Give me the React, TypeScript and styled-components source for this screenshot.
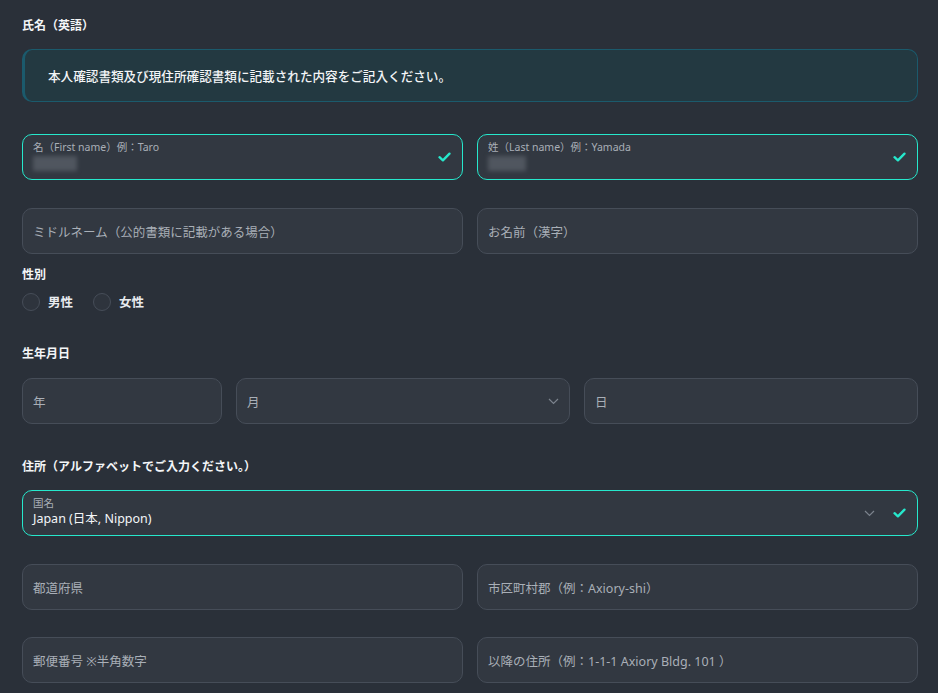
import React from 'react';
import styled, { createGlobalStyle } from 'styled-components';

const GlobalStyle = createGlobalStyle`
  html, body {
    margin: 0;
    padding: 0;
    background: #2a3039;
  }
  body {
    font-family: "Noto Sans", "Noto Sans CJK JP", sans-serif;
    color: #e8ebef;
  }
`;

const Page = styled.div`
  width: 938px;
  height: 693px;
  overflow: hidden;
  box-sizing: border-box;
  padding: 17px 20px 0 22px;
  display: flex;
  flex-direction: column;
`;

const SectionTitle = styled.div<{ $mt?: number }>`
  font-size: 12px;
  font-weight: 700;
  line-height: 18px;
  color: #f4f6f8;
  margin-top: ${(p) => p.$mt ?? 0}px;
`;

const Notice = styled.div`
  margin-top: 14px;
  height: 53px;
  box-sizing: border-box;
  border: 1px solid #1b5a6c;
  border-left: 3px solid #1b5a6c;
  border-radius: 10px;
  background: #233941;
  display: flex;
  align-items: center;
  padding-left: 23px;
  font-size: 12.6px;
  font-weight: 500;
  color: #f2f4f6;
`;

const Row = styled.div<{ $mt: number; $cols?: string }>`
  margin-top: ${(p) => p.$mt}px;
  display: grid;
  grid-template-columns: ${(p) => p.$cols ?? '1fr 1fr'};
  gap: 14px;
`;

const Field = styled.div<{ $active?: boolean }>`
  position: relative;
  height: 46px;
  box-sizing: border-box;
  border: 1px solid ${(p) => (p.$active ? '#26e8cc' : '#464d58')};
  border-radius: 10px;
  background: #323841;
  display: flex;
  align-items: center;
  padding: 0 10px;
`;

const Placeholder = styled.div`
  font-size: 12.5px;
  color: #a9afb7;
  flex: 1;
`;

const Stack = styled.div`
  flex: 1;
  display: flex;
  flex-direction: column;
  margin-top: -3px;
`;

const SmallLabel = styled.div`
  font-size: 10.5px;
  line-height: 14px;
  color: #a9afb7;
`;

const Value = styled.div`
  font-size: 12.5px;
  line-height: 17px;
  color: #f4f6f8;
`;

const Blurred = styled.div<{ $w: number }>`
  margin-top: 2px;
  width: ${(p) => p.$w}px;
  height: 15px;
  background: #50565f;
  filter: blur(2px);
`;

const Icons = styled.div`
  display: flex;
  align-items: center;
  gap: 18px;
  margin-right: 1px;
`;

const Gender = styled.div`
  margin-top: 8px;
  display: flex;
  gap: 20px;
`;

const RadioItem = styled.label`
  display: flex;
  align-items: center;
  gap: 8px;
  font-size: 12.5px;
  font-weight: 700;
  color: #e8ebef;
`;

const Circle = styled.span`
  width: 16px;
  height: 16px;
  border-radius: 50%;
  border: 1px solid #464d58;
  background: #2e343d;
`;

const Check = () => (
  <svg width="13" height="10" viewBox="0 0 13 10">
    <path d="M1.5 5.2 L4.9 8.4 L11.5 1.6" fill="none" stroke="#26e8cc" strokeWidth="2.3" strokeLinecap="round" strokeLinejoin="round" />
  </svg>
);

const Chevron = () => (
  <svg width="11" height="7" viewBox="0 0 11 7">
    <path d="M1 1 L5.5 5.5 L10 1" fill="none" stroke="#7c838d" strokeWidth="1.2" />
  </svg>
);

export default function App() {
  return (
    <>
      <GlobalStyle />
      <Page>
        <SectionTitle>氏名（英語）</SectionTitle>
        <Notice>本人確認書類及び現住所確認書類に記載された内容をご記入ください。</Notice>

        <Row $mt={32}>
          <Field $active>
            <Stack>
              <SmallLabel>名（First name）例：Taro</SmallLabel>
              <Blurred $w={44} />
            </Stack>
            <Icons>
              <Check />
            </Icons>
          </Field>
          <Field $active>
            <Stack>
              <SmallLabel>姓（Last name）例：Yamada</SmallLabel>
              <Blurred $w={38} />
            </Stack>
            <Icons>
              <Check />
            </Icons>
          </Field>
        </Row>

        <Row $mt={28}>
          <Field>
            <Placeholder>ミドルネーム（公的書類に記載がある場合）</Placeholder>
          </Field>
          <Field>
            <Placeholder>お名前（漢字）</Placeholder>
          </Field>
        </Row>

        <SectionTitle $mt={12}>性別</SectionTitle>
        <Gender>
          <RadioItem>
            <Circle />
            男性
          </RadioItem>
          <RadioItem>
            <Circle />
            女性
          </RadioItem>
        </Gender>

        <SectionTitle $mt={34}>生年月日</SectionTitle>
        <Row $mt={15} $cols="200px 1fr 1fr">
          <Field>
            <Placeholder>年</Placeholder>
          </Field>
          <Field>
            <Placeholder>月</Placeholder>
            <Chevron />
          </Field>
          <Field>
            <Placeholder>日</Placeholder>
          </Field>
        </Row>

        <SectionTitle $mt={34}>住所（アルファベットでご入力ください。）</SectionTitle>
        <Row $mt={14} $cols="1fr">
          <Field $active>
            <Stack>
              <SmallLabel>国名</SmallLabel>
              <Value>Japan (日本, Nippon)</Value>
            </Stack>
            <Icons>
              <Chevron />
              <Check />
            </Icons>
          </Field>
        </Row>

        <Row $mt={28}>
          <Field>
            <Placeholder>都道府県</Placeholder>
          </Field>
          <Field>
            <Placeholder>市区町村郡（例：Axiory-shi）</Placeholder>
          </Field>
        </Row>

        <Row $mt={27}>
          <Field>
            <Placeholder>郵便番号 ※半角数字</Placeholder>
          </Field>
          <Field>
            <Placeholder>以降の住所（例：1-1-1 Axiory Bldg. 101 ）</Placeholder>
          </Field>
        </Row>
      </Page>
    </>
  );
}
